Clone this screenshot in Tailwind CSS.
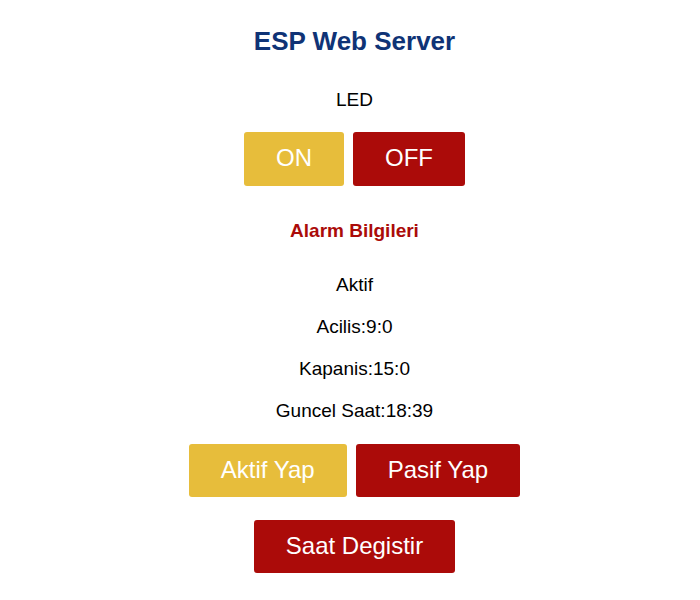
<!DOCTYPE html>
<html lang="tr">
<head>
<meta charset="utf-8">
<meta name="viewport" content="width=device-width, initial-scale=1">
<title>ESP Web Server</title>
<script src="https://cdn.jsdelivr.net/npm/@tailwindcss/browser@4"></script>
</head>
<body class="bg-white text-black font-['Liberation_Sans',Arial,sans-serif] text-center text-[19px] leading-[22px]">
<main class="flex flex-col items-center pt-6 pl-[9px]">
  <h1 class="text-[26px] leading-[34px] font-bold text-[#0f3376]">ESP Web Server</h1>
  <p class="mt-[31px]">LED</p>
  <div class="mt-[21px] flex gap-[9px]">
    <button type="button" class="h-[54px] px-8 pb-[2px] rounded-[3px] bg-[#e7bd3b] text-white text-[24px]">ON</button>
    <button type="button" class="h-[54px] px-8 pb-[2px] rounded-[3px] bg-[#ab0b09] text-white text-[24px]">OFF</button>
  </div>
  <h2 class="mt-[34px] font-bold text-[#ab0b09]">Alarm Bilgileri</h2>
  <div class="mt-8 flex flex-col gap-5">
    <p>Aktif</p>
    <p>Acilis:9:0</p>
    <p>Kapanis:15:0</p>
    <p>Guncel Saat:18:39</p>
  </div>
  <div class="mt-[22px] flex gap-[9px]">
    <button type="button" class="h-[53px] px-8 pb-[2px] rounded-[3px] bg-[#e7bd3b] text-white text-[24px]">Aktif Yap</button>
    <button type="button" class="h-[53px] px-8 pb-[2px] rounded-[3px] bg-[#ab0b09] text-white text-[24px]">Pasif Yap</button>
  </div>
  <button type="button" class="mt-[23px] h-[53px] px-8 pb-[2px] rounded-[3px] bg-[#ab0b09] text-white text-[24px]">Saat Degistir</button>
</main>
</body>
</html>
